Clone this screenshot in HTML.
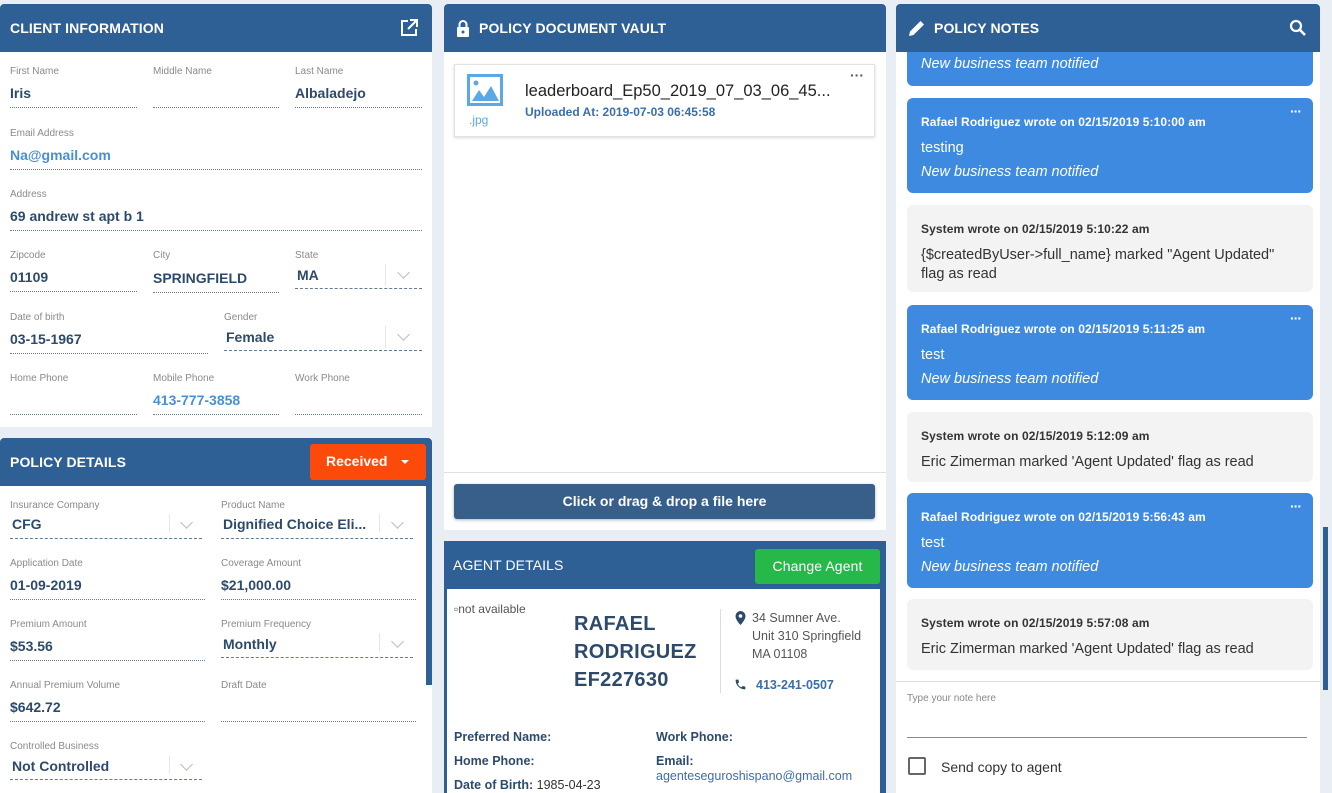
<!DOCTYPE html>
<html><head><meta charset="utf-8"><style>
*{box-sizing:border-box;margin:0;padding:0}
html,body{width:1332px;height:793px;overflow:hidden}
body{background:#e9eef4;font-family:"Liberation Sans",sans-serif;position:relative}
.a{position:absolute}
.panel{position:absolute;background:#fff}
.hd{position:absolute;left:0;right:0;top:0;height:48px;background:#2e6096;border-radius:4px 4px 0 0;color:#fff;font-size:14px;font-weight:bold;line-height:48px;padding-left:10px;letter-spacing:0.1px}
.l{position:absolute;font-size:10px;color:#8a8a8a;white-space:nowrap;margin-top:2px}
.v{position:absolute;font-size:14px;font-weight:bold;color:#2e4a6b;white-space:nowrap}
.ln{position:absolute;border-bottom:1px dotted #6a7a8a;height:1px}
.dl{position:absolute;border-bottom:1px dashed #6a7a8a;height:1px}
.chev{position:absolute;width:9px;height:9px;border-right:1.3px solid #b8bec6;border-bottom:1.3px solid #b8bec6;transform:rotate(45deg)}
.sep{position:absolute;width:1px;background:#e4e6ea}
.card{position:absolute;left:11px;width:406px;border-radius:6px;padding:15px 30px 14px 14px;font-size:14.5px;line-height:19px}
.blue{background:#3d8ae0;color:#fff}
.gray{background:#f3f3f3;color:#333}
.card b{display:block;font-size:12px;margin-bottom:7px;letter-spacing:0.1px}
.card i{display:block;margin-top:5px}
.dots{position:absolute;right:12px;top:4px;font-size:14px;font-weight:bold;letter-spacing:-1px}
</style></head><body>

<!-- CLIENT INFORMATION -->
<div class="panel" style="left:0;top:4px;width:432px;height:423px">
<div class="hd">CLIENT INFORMATION
<svg class="a" style="right:14px;top:15px" width="18" height="18" viewBox="0 0 18 18"><path d="M8 2H2v14h14v-6" fill="none" stroke="#fff" stroke-width="2"/><path d="M10 1h7v7M17 1L8 10" fill="none" stroke="#fff" stroke-width="2"/></svg></div>
</div>
<div class="l" style="left:10px;top:64px">First Name</div><div class="l" style="left:153px;top:64px">Middle Name</div><div class="l" style="left:295px;top:64px">Last Name</div>
<div class="v" style="left:10px;top:85px">Iris</div><div class="v" style="left:295px;top:85px">Albaladejo</div>
<div class="ln" style="left:10px;top:107px;width:127px"></div><div class="ln" style="left:153px;top:107px;width:126px"></div><div class="ln" style="left:295px;top:107px;width:127px"></div>
<div class="l" style="left:10px;top:126px">Email Address</div>
<div class="v" style="left:10px;top:147px;color:#4a8fd6">Na@gmail.com</div>
<div class="ln" style="left:10px;top:169px;width:412px"></div>
<div class="l" style="left:10px;top:187px">Address</div>
<div class="v" style="left:10px;top:208px">69 andrew st apt b 1</div>
<div class="ln" style="left:10px;top:230px;width:412px"></div>
<div class="l" style="left:10px;top:248px">Zipcode</div><div class="l" style="left:153px;top:248px">City</div><div class="l" style="left:295px;top:248px">State</div>
<div class="v" style="left:10px;top:269px">01109</div><div class="v" style="left:153px;top:270px">SPRINGFIELD</div><div class="v" style="left:297px;top:267px">MA</div>
<div class="ln" style="left:10px;top:291px;width:127px"></div><div class="ln" style="left:153px;top:292px;width:126px"></div><div class="dl" style="left:295px;top:288px;width:127px"></div>
<div class="sep" style="left:385px;top:264px;height:22px"></div><div class="chev" style="left:399px;top:268px"></div>
<div class="l" style="left:10px;top:310px">Date of birth</div><div class="l" style="left:224px;top:310px">Gender</div>
<div class="v" style="left:10px;top:331px">03-15-1967</div><div class="v" style="left:226px;top:329px">Female</div>
<div class="ln" style="left:10px;top:353px;width:198px"></div><div class="dl" style="left:224px;top:350px;width:198px"></div>
<div class="sep" style="left:385px;top:326px;height:22px"></div><div class="chev" style="left:399px;top:330px"></div>
<div class="l" style="left:10px;top:371px">Home Phone</div><div class="l" style="left:153px;top:371px">Mobile Phone</div><div class="l" style="left:295px;top:371px">Work Phone</div>
<div class="v" style="left:153px;top:392px;color:#4a8fd6">413-777-3858</div>
<div class="ln" style="left:10px;top:414px;width:127px"></div><div class="ln" style="left:153px;top:414px;width:126px"></div><div class="ln" style="left:295px;top:414px;width:127px"></div>

<!-- POLICY DETAILS -->
<div class="panel" style="left:0;top:438px;width:432px;height:355px">
<div class="hd">POLICY DETAILS</div>
<div class="a" style="left:310px;top:6px;width:116px;height:36px;background:#fc4a0a;border-radius:3px;color:#fff;font-size:14px;font-weight:bold;line-height:34px;padding-left:16px">Received <span style="display:inline-block;margin-left:10px;border-left:4px solid transparent;border-right:4px solid transparent;border-top:4px solid #fff;vertical-align:middle"></span></div>
<div class="a" style="left:426px;top:48px;width:6px;height:199px;background:#2e6096"></div>
</div>
<div class="l" style="left:10px;top:498px">Insurance Company</div><div class="l" style="left:221px;top:498px">Product Name</div>
<div class="v" style="left:12px;top:516px">CFG</div><div class="v" style="left:223px;top:516px">Dignified Choice Eli...</div>
<div class="dl" style="left:10px;top:538px;width:192px"></div><div class="dl" style="left:221px;top:538px;width:192px"></div>
<div class="sep" style="left:169px;top:514px;height:18px"></div><div class="chev" style="left:182px;top:518px"></div>
<div class="sep" style="left:379px;top:514px;height:18px"></div><div class="chev" style="left:393px;top:518px"></div>
<div class="l" style="left:10px;top:556px">Application Date</div><div class="l" style="left:221px;top:556px">Coverage Amount</div>
<div class="v" style="left:10px;top:577px">01-09-2019</div><div class="v" style="left:221px;top:577px">$21,000.00</div>
<div class="ln" style="left:10px;top:599px;width:195px"></div><div class="ln" style="left:221px;top:599px;width:195px"></div>
<div class="l" style="left:10px;top:617px">Premium Amount</div><div class="l" style="left:221px;top:617px">Premium Frequency</div>
<div class="v" style="left:10px;top:638px">$53.56</div><div class="v" style="left:223px;top:636px">Monthly</div>
<div class="ln" style="left:10px;top:660px;width:195px"></div><div class="dl" style="left:221px;top:657px;width:192px"></div>
<div class="sep" style="left:379px;top:633px;height:18px"></div><div class="chev" style="left:393px;top:637px"></div>
<div class="l" style="left:10px;top:678px">Annual Premium Volume</div><div class="l" style="left:221px;top:678px">Draft Date</div>
<div class="v" style="left:10px;top:699px">$642.72</div>
<div class="ln" style="left:10px;top:721px;width:195px"></div><div class="ln" style="left:221px;top:721px;width:195px"></div>
<div class="l" style="left:10px;top:739px">Controlled Business</div>
<div class="v" style="left:12px;top:758px">Not Controlled</div>
<div class="dl" style="left:10px;top:779px;width:192px"></div>
<div class="sep" style="left:169px;top:756px;height:18px"></div><div class="chev" style="left:182px;top:760px"></div>

<!-- VAULT -->
<div class="panel" style="left:444px;top:4px;width:442px;height:526px">
<div class="hd" style="padding-left:35px">POLICY DOCUMENT VAULT
<svg class="a" style="left:12px;top:16px" width="14" height="17" viewBox="0 0 14 17"><path d="M3.5 7V4.5a3.5 3.5 0 0 1 7 0V7" fill="none" stroke="#fff" stroke-width="2"/><rect x="1" y="7" width="12" height="10" rx="1" fill="#fff"/><circle cx="7" cy="12" r="1.5" fill="#2e6096"/></svg></div>
<div class="a" style="left:10px;top:60px;width:421px;height:73px;border:1px solid #e2e2e2;box-shadow:0 1px 3px rgba(0,0,0,.15)">
<svg class="a" style="left:12px;top:9px" width="36" height="32" viewBox="0 0 36 32"><rect x="1.5" y="1.5" width="33" height="29" fill="none" stroke="#5aa9e6" stroke-width="3"/><circle cx="9" cy="9" r="2.5" fill="#5aa9e6"/><path d="M5 27l7-11 5 7 7-11 8 15z" fill="#5aa9e6"/></svg>
<div class="a" style="left:14px;top:48px;font-size:12px;color:#5aa9e6">.jpg</div>
<div class="a" style="left:70px;top:17px;font-size:16.5px;color:#222">leaderboard_Ep50_2019_07_03_06_45...</div>
<div class="a" style="left:70px;top:40px;font-size:12px;font-weight:bold;color:#3b6ea8">Uploaded At: 2019-07-03 06:45:58</div>
<div class="a" style="right:10px;top:2px;font-size:14px;font-weight:bold;color:#555">···</div>
</div>
<div class="a" style="left:0;right:0;top:468px;border-top:1px solid #e0e0e0"></div>
<div class="a" style="left:10px;top:480px;width:421px;height:35px;background:#385f8a;border-radius:3px;color:#fff;font-size:14px;font-weight:bold;text-align:center;line-height:35px;box-shadow:0 1px 3px rgba(0,0,0,.3)">Click or drag &amp; drop a file here</div>
</div>

<!-- AGENT -->
<div class="panel" style="left:444px;top:541px;width:442px;height:252px;border-left:3px solid #2e6096;border-right:6px solid #2e6096">
<div class="hd" style="left:-3px;right:-6px;padding-left:9px;font-weight:normal">AGENT DETAILS
<div class="a" style="right:6px;top:8px;width:125px;height:35px;background:#27b84a;border-radius:3px;font-size:14px;line-height:35px;text-align:center">Change Agent</div></div>
<div class="a" style="left:7px;top:61px;font-size:12px;color:#555">▫not available</div>
<div class="a" style="left:127px;top:69px;font-size:20px;color:#2e4a6b;line-height:28px;letter-spacing:0.3px;font-weight:bold;-webkit-text-stroke:0">RAFAEL<br>RODRIGUEZ<br>EF227630</div>
<div class="a" style="left:273px;top:68px;width:1px;height:84px;background:#ddd"></div>
<svg class="a" style="left:288px;top:70px" width="11" height="14" viewBox="0 0 11 14"><path d="M5.5 0A5 5 0 0 0 .5 5c0 4 5 9 5 9s5-5 5-9a5 5 0 0 0-5-5z" fill="#2e4a6b"/><circle cx="5.5" cy="5" r="1.8" fill="#fff"/></svg>
<div class="a" style="left:305px;top:68px;font-size:12.5px;color:#555;line-height:18px">34 Sumner Ave.<br>Unit 310 Springfield<br>MA 01108</div>
<svg class="a" style="left:287px;top:137px" width="13" height="13" viewBox="0 0 24 24"><path d="M6.6 10.8a15 15 0 0 0 6.6 6.6l2.2-2.2c.3-.3.7-.4 1-.2 1.1.4 2.3.6 3.6.6.6 0 1 .4 1 1V20c0 .6-.4 1-1 1A17 17 0 0 1 3 4c0-.6.4-1 1-1h3.5c.6 0 1 .4 1 1 0 1.3.2 2.5.6 3.6.1.3 0 .7-.2 1z" fill="#2e4a6b"/></svg>
<div class="a" style="left:309px;top:137px;font-size:12.5px;font-weight:bold;color:#3b6ea8">413-241-0507</div>
<div class="a" style="left:7px;top:184px;font-size:12.5px;font-weight:bold;color:#2e4a6b;line-height:24px">Preferred Name:<br>Home Phone:<br>Date of Birth: <span style="font-weight:normal;color:#333">1985-04-23</span></div>
<div class="a" style="left:209px;top:184px;font-size:12.5px;font-weight:bold;color:#2e4a6b;line-height:24px">Work Phone:<br>Email:</div>
<div class="a" style="left:209px;top:228px;font-size:12.5px;color:#3b6ea8">agenteseguroshispano@gmail.com</div>
</div>

<!-- NOTES -->
<div class="panel" style="left:896px;top:4px;width:424px;height:789px;overflow:hidden">
<div class="card blue" style="top:-10px;height:92px"><i style="position:absolute;left:14px;top:61px;margin:0">New business team notified</i></div>
<div class="card blue" style="top:94px;height:95px"><span class="dots">···</span><b>Rafael Rodriguez wrote on 02/15/2019 5:10:00 am</b>testing<i>New business team notified</i></div>
<div class="card gray" style="top:201px;height:87px"><b>System wrote on 02/15/2019 5:10:22 am</b>{$createdByUser-&gt;full_name} marked "Agent Updated" flag as read</div>
<div class="card blue" style="top:301px;height:95px"><span class="dots">···</span><b>Rafael Rodriguez wrote on 02/15/2019 5:11:25 am</b>test<i>New business team notified</i></div>
<div class="card gray" style="top:408px;height:70px"><b>System wrote on 02/15/2019 5:12:09 am</b>Eric Zimerman marked 'Agent Updated' flag as read</div>
<div class="card blue" style="top:489px;height:95px"><span class="dots">···</span><b>Rafael Rodriguez wrote on 02/15/2019 5:56:43 am</b>test<i>New business team notified</i></div>
<div class="card gray" style="top:595px;height:71px"><b>System wrote on 02/15/2019 5:57:08 am</b>Eric Zimerman marked 'Agent Updated' flag as read</div>
<div class="a" style="left:0;right:0;top:677px;height:112px;background:#fff;border-top:1px solid #ddd"></div>
<div class="a" style="left:11px;top:689px;font-size:10px;color:#888">Type your note here</div>
<div class="a" style="left:11px;top:733px;width:400px;border-top:1px solid #888"></div>
<div class="a" style="left:12px;top:753px;width:18px;height:18px;border:2px solid #666;border-radius:2px"></div>
<div class="a" style="left:45px;top:755px;font-size:14px;color:#333">Send copy to agent</div>
<div class="hd" style="padding-left:38px">POLICY NOTES
<svg class="a" style="left:12px;top:15px" width="18" height="18" viewBox="0 0 18 18"><path d="M1 17l1-4.5L12.5 2 16 5.5 5.5 16z" fill="#fff"/></svg>
<svg class="a" style="right:14px;top:15px" width="17" height="17" viewBox="0 0 17 17"><circle cx="7" cy="7" r="5" fill="none" stroke="#fff" stroke-width="2.2"/><path d="M10.5 10.5L16 16" stroke="#fff" stroke-width="2.5"/></svg></div>
</div>
<div class="a" style="left:1323px;top:527px;width:5px;height:163px;background:#2e6096"></div>
</body></html>
